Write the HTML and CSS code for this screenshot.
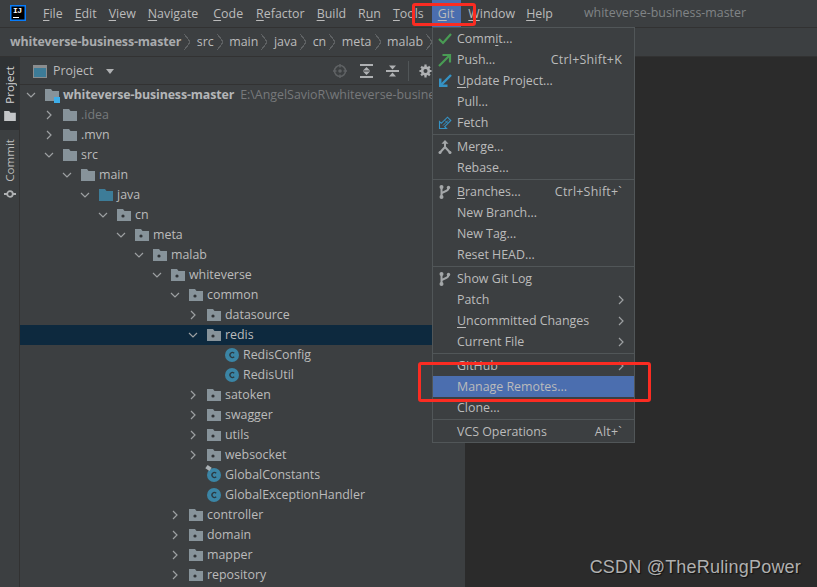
FILE: index.html
```html
<!DOCTYPE html>
<html lang="en">
<head>
<meta charset="utf-8">
<title>whiteverse-business-master</title>
<link rel="stylesheet" href="styles.css">
</head>
<body>
<svg class="defs" width="0" height="0" aria-hidden="true">
  <symbol id="folder" viewBox="0 0 14 12"><path fill="#87939a" d="M0 0h6l1.500 2H14v10H0z"/></symbol>
  <symbol id="pkg" viewBox="0 0 14 12"><path fill="#87939a" d="M0 0h6l1.500 2H14v10H0z"/><circle cx="6" cy="7" r="1.600" fill="#2f3336"/></symbol>
  <symbol id="srcf" viewBox="0 0 14 12"><path fill="#3d7c98" d="M0 0h6l1.500 2H14v10H0z"/></symbol>
  <symbol id="cls" viewBox="0 0 14 14"><circle cx="7" cy="7" r="7" fill="#3b85a5"/><path fill="none" stroke="#2b3a42" stroke-width="1.300" d="M9.200 5.200A2.500 2.500 0 1 0 9.200 8.800"/></symbol>
  <symbol id="chev-r" viewBox="0 0 10 10"><path fill="none" stroke="#9da0a2" stroke-width="1.200" d="M3 1l4 4-4 4"/></symbol>
  <symbol id="chev-d" viewBox="0 0 10 10"><path fill="none" stroke="#9da0a2" stroke-width="1.200" d="M1 3l4 4 4-4"/></symbol>
  <symbol id="branch" viewBox="0 0 14 14"><g fill="#a4a7a9"><circle cx="3.500" cy="2" r="2"/><circle cx="3.500" cy="12" r="2"/><circle cx="10.500" cy="2.500" r="1.700"/></g><path fill="none" stroke="#a4a7a9" stroke-width="2" d="M3.500 2v10M10.500 3c0 4-7 3.500-7 6"/></symbol>
</svg>

<header class="titlebar">
  <div class="logo"><span class="logotext">IJ</span><i class="logobar"></i></div>
  <nav class="menubar">
    <span class="mi"><u>F</u>ile</span>
    <span class="mi"><u>E</u>dit</span>
    <span class="mi"><u>V</u>iew</span>
    <span class="mi nudge3"><u>N</u>avigate</span>
    <span class="mi nudge1"><u>C</u>ode</span>
    <span class="mi"><u>R</u>efactor</span>
    <span class="mi"><u>B</u>uild</span>
    <span class="mi">R<u>u</u>n</span>
    <span class="mi nudge2"><u>T</u>ools</span>
    <span class="mi active"><u>G</u>it</span>
    <span class="mi tight"><u>W</u>indow</span>
    <span class="mi"><u>H</u>elp</span>
  </nav>
  <span class="apptitle">whiteverse-business-master</span>
</header>

<div class="navbar">
  <b>whiteverse-business-master</b><i class="sep"></i><span>src</span><i class="sep"></i><span>main</span><i class="sep"></i><span>java</span><i class="sep"></i><span>cn</span><i class="sep"></i><span>meta</span><i class="sep"></i><span>malab</span><i class="sep"></i>
</div>

<main class="workspace">
  <aside class="strip">
    <div class="tab selected">
      <svg width="12" height="10" viewBox="0 0 14 12"><path fill="#c4c6c8" d="M0 0h6l1.500 2H14v10H0z"/></svg>
      <span class="vtext">Project</span>
    </div>
    <div class="tab">
      <svg width="12" height="10" viewBox="0 0 12 10"><circle cx="6" cy="5" r="2.800" fill="none" stroke="#afb1b3" stroke-width="1.800"/><path stroke="#afb1b3" stroke-width="1.800" d="M0 5h3M9 5h3"/></svg>
      <span class="vtext">Commit</span>
    </div>
  </aside>

  <section class="panel">
    <div class="panelhead">
      <svg class="pview" width="14" height="13" viewBox="0 0 14 13"><rect x="0" y="0" width="14" height="13" fill="#8a8d8f"/><rect x="1" y="3" width="12" height="9" fill="#3d7c98"/></svg>
      <span class="ptitle">Project</span>
      <svg class="pdrop" width="8" height="5" viewBox="0 0 8 5"><path fill="#afb1b3" d="M0 0h8L4 5z"/></svg>
      <div class="ptools">
        <svg width="14" height="14" viewBox="0 0 14 14"><circle cx="7" cy="7" r="5.500" fill="none" stroke="#5f6264" stroke-width="1.500"/><circle cx="7" cy="7" r="1.800" fill="#5f6264"/><path stroke="#5f6264" stroke-width="1.500" d="M7 0v3.500M7 10.500V14M0 7h3.500M10.500 7H14"/></svg>
        <svg width="13" height="14" viewBox="0 0 13 14"><path fill="#afb1b3" d="M0 0h13v2H0zM0 12h13v2H0zM6.500 3L9.500 6h-6zM6.500 11L3.500 8h6zM3 6.500h7v1H3z"/></svg>
        <svg width="13" height="14" viewBox="0 0 13 14"><path fill="#afb1b3" d="M0 6h13v2H0zM6.500 5.500L3 1.500h7zM6.500 8.500l3.500 4H3z"/></svg>
        <i class="tooldiv"></i>
        <svg width="13" height="14" viewBox="0 0 14 14"><circle cx="7" cy="7" r="3.600" fill="none" stroke="#afb1b3" stroke-width="2.800"/><path stroke="#afb1b3" stroke-width="2.400" d="M7 0v3M7 11v3M.500 7h3M10.500 7h3M2.300 2.300l2 2M9.700 9.700l2 2M11.700 2.300l-2 2M4.300 9.700l-2 2"/></svg>
      </div>
    </div>
    <ul class="tree">
      <li class="row l0"><svg class="chev"><use href="#chev-d"/></svg><span class="rooticon"><svg class="ico"><use href="#folder"/></svg><i class="rootmark"></i></span><b class="rootname">whiteverse-business-master</b><span class="path">E:\AngelSavioR\whiteverse-business-master</span></li>
      <li class="row l1"><svg class="chev"><use href="#chev-r"/></svg><svg class="ico"><use href="#folder"/></svg><span class="dim">.idea</span></li>
      <li class="row l1"><svg class="chev"><use href="#chev-r"/></svg><svg class="ico"><use href="#folder"/></svg><span>.mvn</span></li>
      <li class="row l1"><svg class="chev"><use href="#chev-d"/></svg><svg class="ico"><use href="#folder"/></svg><span>src</span></li>
      <li class="row l2"><svg class="chev"><use href="#chev-d"/></svg><svg class="ico"><use href="#folder"/></svg><span>main</span></li>
      <li class="row l3"><svg class="chev"><use href="#chev-d"/></svg><svg class="ico"><use href="#srcf"/></svg><span>java</span></li>
      <li class="row l4"><svg class="chev"><use href="#chev-d"/></svg><svg class="ico"><use href="#pkg"/></svg><span>cn</span></li>
      <li class="row l5"><svg class="chev"><use href="#chev-d"/></svg><svg class="ico"><use href="#pkg"/></svg><span>meta</span></li>
      <li class="row l6"><svg class="chev"><use href="#chev-d"/></svg><svg class="ico"><use href="#pkg"/></svg><span>malab</span></li>
      <li class="row l7"><svg class="chev"><use href="#chev-d"/></svg><svg class="ico"><use href="#pkg"/></svg><span>whiteverse</span></li>
      <li class="row l8"><svg class="chev"><use href="#chev-d"/></svg><svg class="ico"><use href="#pkg"/></svg><span>common</span></li>
      <li class="row l9"><svg class="chev"><use href="#chev-r"/></svg><svg class="ico"><use href="#pkg"/></svg><span>datasource</span></li>
      <li class="row l9 current"><svg class="chev"><use href="#chev-d"/></svg><svg class="ico"><use href="#pkg"/></svg><span>redis</span></li>
      <li class="row l10"><i class="chev"></i><svg class="ico cl"><use href="#cls"/></svg><span>RedisConfig</span></li>
      <li class="row l10"><i class="chev"></i><svg class="ico cl"><use href="#cls"/></svg><span>RedisUtil</span></li>
      <li class="row l9"><svg class="chev"><use href="#chev-r"/></svg><svg class="ico"><use href="#pkg"/></svg><span>satoken</span></li>
      <li class="row l9"><svg class="chev"><use href="#chev-r"/></svg><svg class="ico"><use href="#pkg"/></svg><span>swagger</span></li>
      <li class="row l9"><svg class="chev"><use href="#chev-r"/></svg><svg class="ico"><use href="#pkg"/></svg><span>utils</span></li>
      <li class="row l9"><svg class="chev"><use href="#chev-r"/></svg><svg class="ico"><use href="#pkg"/></svg><span>websocket</span></li>
      <li class="row l9"><i class="chev"></i><span class="rooticon"><svg class="ico cl"><use href="#cls"/></svg><i class="pin"></i></span><span>GlobalConstants</span></li>
      <li class="row l9"><i class="chev"></i><svg class="ico cl"><use href="#cls"/></svg><span>GlobalExceptionHandler</span></li>
      <li class="row l8"><svg class="chev"><use href="#chev-r"/></svg><svg class="ico"><use href="#pkg"/></svg><span>controller</span></li>
      <li class="row l8"><svg class="chev"><use href="#chev-r"/></svg><svg class="ico"><use href="#pkg"/></svg><span>domain</span></li>
      <li class="row l8"><svg class="chev"><use href="#chev-r"/></svg><svg class="ico"><use href="#pkg"/></svg><span>mapper</span></li>
      <li class="row l8"><svg class="chev"><use href="#chev-r"/></svg><svg class="ico"><use href="#pkg"/></svg><span>repository</span></li>
    </ul>
  </section>
  <section class="editor"></section>
</main>

<div class="menu">
  <div class="group">
    <div class="item"><svg class="mico" width="14" height="14" viewBox="0 0 14 14"><path fill="none" stroke="#499c54" stroke-width="2.200" d="M1 7l4 4 8-9"/></svg><span class="lbl">Comm<u>i</u>t...</span></div>
    <div class="item"><svg class="mico" width="14" height="14" viewBox="0 0 14 14"><path fill="none" stroke="#499c54" stroke-width="2.200" d="M1 13L11 3M4.500 2H12v7.500"/></svg><span class="lbl">Push...</span><span class="key">Ctrl+Shift+K</span></div>
    <div class="item"><svg class="mico" width="14" height="14" viewBox="0 0 14 14"><path fill="none" stroke="#3592c4" stroke-width="2.400" d="M13 1L3 11"/><path fill="#3592c4" d="M1 4.500l2.500 0 0 6 6 0 0 2.500H1z"/></svg><span class="lbl"><u>U</u>pdate Project...</span></div>
    <div class="item"><i class="mico"></i><span class="lbl">Pull...</span></div>
    <div class="item"><svg class="mico" width="14" height="14" viewBox="0 0 14 14"><path fill="none" stroke="#3592c4" stroke-width="1.100" d="M8.500 12.500H1.500V5.500l1.800 1.800L9.500 1.200l3.300 3.300-6.100 6.200z"/><path fill="none" stroke="#3592c4" stroke-width="1" d="M5 9.500l5-5M7 4.500l2.500 2.500"/></svg><span class="lbl">Fetch</span></div>
  </div>
  <div class="group">
    <div class="item"><svg class="mico" width="14" height="14" viewBox="0 0 14 14"><path fill="none" stroke="#a4a7a9" stroke-width="2" d="M7 2.500v4.500L2 12.500M7 7l5 5.500"/><path fill="#a4a7a9" d="M7 0l3.500 3.800h-7z"/><circle cx="2" cy="12.500" r="1.500" fill="#a4a7a9"/><circle cx="12" cy="12.500" r="1.500" fill="#a4a7a9"/></svg><span class="lbl">Merge...</span></div>
    <div class="item"><i class="mico"></i><span class="lbl">Rebase...</span></div>
  </div>
  <div class="group">
    <div class="item"><svg class="mico"><use href="#branch"/></svg><span class="lbl"><u>B</u>ranches...</span><span class="key">Ctrl+Shift+`</span></div>
    <div class="item"><i class="mico"></i><span class="lbl">New Branch...</span></div>
    <div class="item"><i class="mico"></i><span class="lbl">New Tag...</span></div>
    <div class="item"><i class="mico"></i><span class="lbl">Reset HEAD...</span></div>
  </div>
  <div class="group">
    <div class="item"><svg class="mico"><use href="#branch"/></svg><span class="lbl">Show Git Log</span></div>
    <div class="item"><i class="mico"></i><span class="lbl">Patch</span><svg class="sub"><use href="#chev-r"/></svg></div>
    <div class="item"><i class="mico"></i><span class="lbl"><u>U</u>ncommitted Changes</span><svg class="sub"><use href="#chev-r"/></svg></div>
    <div class="item"><i class="mico"></i><span class="lbl">Current File</span><svg class="sub"><use href="#chev-r"/></svg></div>
  </div>
  <div class="group">
    <div class="item"><i class="mico"></i><span class="lbl">GitHub</span><svg class="sub"><use href="#chev-r"/></svg></div>
    <div class="item hover"><i class="mico"></i><span class="lbl">Manage Remotes...</span></div>
    <div class="item"><i class="mico"></i><span class="lbl">Clone...</span></div>
  </div>
  <div class="group">
    <div class="item"><i class="mico"></i><span class="lbl">VCS Operations</span><span class="key">Alt+`</span></div>
  </div>
</div>

<div class="mark mark-git"></div>
<div class="mark mark-remotes"></div>
<div class="watermark">CSDN @TheRulingPower</div>
</body>
</html>
```
FILE: styles.css
```css
* { box-sizing: border-box; }
html, body { margin: 0; padding: 0; }
body {
  width: 817px; height: 587px; overflow: hidden; position: relative;
  display: flex; flex-direction: column;
  background: #3c3f41; color: #bbbbbb;
  font: 12.4px/20px "Open Sans", sans-serif;
}
u { text-decoration: underline; text-underline-offset: 2px; text-decoration-thickness: 1px; }
.defs { position: absolute; }

.titlebar { height: 28px; flex: none; display: flex; align-items: center; padding-left: 10px; background: #3c3f41; border-bottom: 1px solid #323232; }
.logo { flex: none; width: 16px; height: 16px; background: #000; border: 1px solid #087cfa; display: flex; flex-direction: column; padding: 1px 0 0 2px; box-shadow: inset 0 0 0 .5px #087cfa; margin-top: -1px; }
.logotext { font: 700 8px/8px "Liberation Mono", monospace; color: #fff; letter-spacing: -.5px; height: 8px; }
.logobar { display: block; width: 6px; height: 1px; background: #fff; margin-top: 2px; }
.menubar { display: flex; margin-left: 11px; height: 27px; }
.mi { padding: 0 6px; display: flex; align-items: center; white-space: pre; }
.mi.nudge3 { margin-right: 3px; }
.mi.nudge2 { margin-right: 2px; }
.mi.nudge1 { margin-right: 1px; }
.mi.tight { margin-right: -1px; }
.mi.active { background: #4b6eaf; padding-right: 7px; margin-right: 1px; }
.apptitle { margin-left: 25px; color: #808486; margin-top: -2px; }

.navbar { height: 29px; flex: none; display: flex; align-items: center; padding-left: 10px; background: #3c3f41; border-bottom: 1px solid #323232; white-space: nowrap; }
.navbar b { font-weight: 700; color: #a9abad; letter-spacing: -.13px; }
.sep { width: 6px; height: 16px; margin: 0 6.6px 0 3px; flex: none; background: linear-gradient(to top right, transparent 46%, #5e6163 46%, #5e6163 58%, transparent 58%) top/100% 50% no-repeat, linear-gradient(to bottom right, transparent 46%, #5e6163 46%, #5e6163 58%, transparent 58%) bottom/100% 50% no-repeat; }

.workspace { flex: 1; min-height: 0; display: flex; }
.strip { width: 20px; flex: none; border-right: 1px solid #323232; background: #3c3f41; font-size: 11.6px; }
.tab { display: flex; flex-direction: column; align-items: center; gap: 7px; }
.tab.selected { background: #2f3234; height: 73px; color: #d4d4d4; flex-direction: column-reverse; justify-content: flex-end; padding-top: 9px; }
.tab:not(.selected) { padding-top: 9px; flex-direction: column-reverse; justify-content: flex-end; }
.vtext { writing-mode: vertical-rl; transform: rotate(180deg); line-height: 19px; }

.panel { width: 445px; flex: none; background: #3c3f41; overflow: hidden; display: flex; flex-direction: column; }
.panelhead { height: 28px; flex: none; display: flex; align-items: center; border-bottom: 1px solid #323232; padding-left: 13px; padding-top: 1px; }
.ptitle { margin-left: 6px; }
.pdrop { margin-left: 13px; }
.ptools { display: flex; align-items: center; gap: 13px; margin-left: 219px; }
.tooldiv { width: 1px; height: 20px; background: #515658; margin: 0 -3px 0 -4px; }
.tree { list-style: none; margin: 0; padding: 0; }
.row { height: 20px; display: flex; align-items: center; white-space: nowrap; }
.row.current { background: #0d293e; }
.l0 { padding-left: 3px; }
.l1 { padding-left: 21px; }
.l2 { padding-left: 39px; }
.l3 { padding-left: 57px; }
.l4 { padding-left: 75px; }
.l5 { padding-left: 93px; }
.l6 { padding-left: 111px; }
.l7 { padding-left: 129px; }
.l8 { padding-left: 147px; }
.l9 { padding-left: 165px; }
.l10 { padding-left: 183px; }
.chev { width: 10px; height: 10px; margin: 0 9px 0 3px; flex: none; display: block; }
.ico { width: 14px; height: 12px; flex: none; margin-right: 4px; display: block; }
.ico.cl { height: 14px; }
.rooticon { position: relative; display: block; flex: none; }
.rootmark { position: absolute; right: 3px; bottom: -2px; width: 6px; height: 6px; background: #3daee9; }
.pin { position: absolute; left: -1px; top: -2px; width: 5px; height: 4px; background: #a9b0b4; transform: rotate(35deg); }
.rootname { font-weight: 700; color: #b4b6b8; letter-spacing: -.13px; }
.path { color: #77797b; margin-left: 6px; }
.dim { color: #767a7c; }

.editor { flex: 1; background: #2b2b2b; }

.menu { position: absolute; left: 432px; top: 27px; width: 203px; height: 416px; background: #3c3f41; border: 1px solid #515658; }
.group { border-bottom: 1px solid #515658; padding: 0 0 1px; }
.group + .group { padding-top: 1px; }
.group:last-child { border-bottom: 0; }
.item { height: 21px; display: flex; align-items: center; padding-left: 5px; padding-right: 12px; white-space: pre; }
.item.hover { background: #4b6eaf; }
.mico { width: 14px; height: 14px; flex: none; margin-right: 5px; display: block; }
.lbl { flex: 1; }
.key { margin-left: auto; letter-spacing: .25px; }
.sub { width: 10px; height: 10px; margin-right: -4px; flex: none; }

.mark { position: absolute; border: 3px solid #fb2c22; border-radius: 3px; }
.mark-git { left: 412px; top: 3px; width: 64px; height: 23px; }
.mark-remotes { left: 418px; top: 362px; width: 233px; height: 40px; }
.watermark { position: absolute; right: 16px; bottom: 8px; font: 18px/24px "Liberation Sans", sans-serif; letter-spacing: .2px; color: #b0b0b0; text-shadow: 1px 1px 1px #111; }
```
